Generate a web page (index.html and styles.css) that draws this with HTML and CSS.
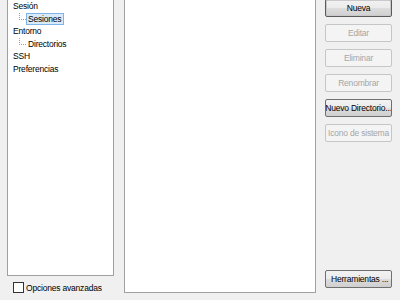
FILE: index.html
```html
<!DOCTYPE html>
<html>
<head>
<meta charset="utf-8">
<link rel="stylesheet" href="styles.css">
</head>
<body>
<div class="window">
  <div class="left">
    <div class="tree">
      <div class="node">Sesión</div>
      <div class="node child"><span class="conn"></span><span class="label selected">Sesiones</span></div>
      <div class="node">Entorno</div>
      <div class="node child"><span class="conn"></span><span class="label">Directorios</span></div>
      <div class="node">SSH</div>
      <div class="node">Preferencias</div>
    </div>
    <label class="check"><span class="box"></span><span>Opciones avanzadas</span></label>
  </div>
  <div class="list"></div>
  <div class="buttons">
    <div class="btn default">Nueva</div>
    <div class="btn disabled">Editar</div>
    <div class="btn disabled">Eliminar</div>
    <div class="btn disabled">Renombrar</div>
    <div class="btn">Nuevo Directorio...</div>
    <div class="btn disabled">Icono de sistema</div>
    <div class="btn tools">Herramientas ...</div>
  </div>
</div>
</body>
</html>
```
FILE: styles.css
```css
html, body {
  margin: 0;
  padding: 0;
  background: #f0f0f0;
  overflow: hidden;
}
body {
  font-family: "Liberation Sans", Arial, sans-serif;
  font-size: 8.5px;
  letter-spacing: -0.2px;
  color: #000;
}
.window {
  display: flex;
  height: 300px;
  padding-left: 7px;
  box-sizing: border-box;
  margin-top: -2px;
}
.left {
  width: 107px;
  display: flex;
  flex-direction: column;
}
.tree {
  height: 278px;
  box-sizing: border-box;
  background: #fff;
  border: 1px solid #a0a0a0;
  padding: 1px 0 0 5px;
}
.node {
  height: 12.5px;
  line-height: 12.5px;
  display: flex;
  align-items: flex-start;
  white-space: nowrap;
}
.child {
  padding-left: 6px;
}
.conn {
  width: 6px;
  height: 6px;
  border-left: 1px dotted #a0a0a0;
  border-bottom: 1px dotted #a0a0a0;
  flex: none;
}
.label {
  padding: 0 2px 0 1px;
  line-height: 10.5px;
  border: 1px solid transparent;
}
.label.selected {
  background: #d9ebf9;
  border-color: #7eb4ea;
}
.check {
  display: flex;
  align-items: center;
  margin-top: 6px;
  padding-left: 6px;
  gap: 2px;
  white-space: nowrap;
}
.box {
  width: 9px;
  height: 9px;
  border: 1px solid #333;
  background: #fff;
  flex: none;
}
.list {
  width: 192px;
  height: 295px;
  box-sizing: border-box;
  margin-left: 10px;
  background: #fff;
  border: 1px solid #a0a0a0;
}
.buttons {
  margin-left: 9px;
  width: 67px;
  display: flex;
  flex-direction: column;
  gap: 7px;
  padding-top: 1px;
}
.btn {
  height: 18px;
  box-sizing: border-box;
  border: 1px solid #707070;
  border-radius: 2px;
  background: linear-gradient(#f2f2f2 0%, #ebebeb 50%, #dddddd 51%, #cfcfcf 100%);
  display: flex;
  justify-content: center;
  align-items: center;
  white-space: nowrap;
  overflow: hidden;
}
.btn.default {
  border-color: #5a5a5a;
  box-shadow: inset 0 0 0 1px #c9c9c9;
}
.btn.disabled {
  border-color: #c4c6c8;
  background: #f4f4f4;
  color: #a6a6a6;
}
.btn.tools {
  margin-top: auto;
  margin-bottom: 10px;
  justify-content: flex-start;
  padding-left: 5px;
}
```
